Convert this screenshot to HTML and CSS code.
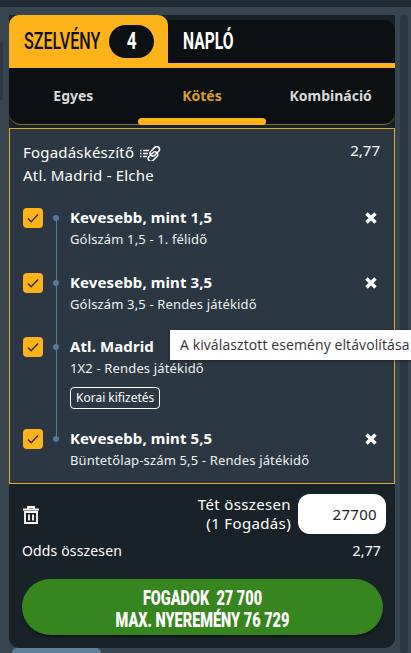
FILE: index.html
```html
<!DOCTYPE html>
<html lang="hu">
<head>
  <meta charset="UTF-8">
  <title>Szelvény</title>
  <link rel="stylesheet" href="styles.css">
</head>
<body>

  <div class="top-bar"></div>

  <div class="page">
    <div class="side-stub"></div>

    <div class="slip">
      <div class="tabs">
        <div class="tab active"><span class="tab-label">SZELVÉNY</span> <span class="count"><span class="count-num">4</span></span></div>
        <div class="tab"><span class="tab-label bold">NAPLÓ</span></div>
      </div>

      <div class="subtabs">
        <div class="subtab">Egyes</div>
        <div class="subtab current">Kötés</div>
        <div class="subtab">Kombináció</div>
      </div>

      <div class="builder">
        <div class="builder-head">
          <div>
            <div class="builder-title">Fogadáskészítő
              <svg class="link-icon" width="24" height="15" viewBox="0 0 24 15">
                <path d="M0 4.5h1.5M0 7.5h1.5M0 10.5h1.5M3 4.5h6M3 7.5h5M3 10.5h4" stroke="#fff" stroke-width="1.4" fill="none"/>
                <rect x="7.5" y="5" width="11" height="5.5" rx="2.75" transform="rotate(-45 13 7.75) translate(-2 2)" stroke="#fff" stroke-width="1.5" fill="none"/>
                <rect x="7.5" y="5" width="11" height="5.5" rx="2.75" transform="rotate(-45 13 7.75) translate(3 -.5)" stroke="#fff" stroke-width="1.5" fill="none"/>
              </svg>
            </div>
            <div class="builder-match">Atl. Madrid - Elche</div>
          </div>
          <div class="builder-odds">2,77</div>
        </div>

        <div class="legs">
          <div class="leg">
            <div class="check"><svg width="14" height="14" viewBox="0 0 14 14"><path d="M2 7.5l3.2 3.2L12 3.5" stroke="#3a2a05" stroke-width="1.4" fill="none"/></svg></div>
            <div class="dot"></div>
            <div class="leg-text">
              <div class="leg-title">Kevesebb, mint 1,5</div>
              <div class="leg-sub">Gólszám 1,5 - 1. félidő</div>
            </div>
            <svg class="remove" width="12" height="12" viewBox="0 0 12 12"><path d="M1.5 1.5l9 9M10.5 1.5l-9 9" stroke="#fff" stroke-width="3.4"/></svg>
          </div>

          <div class="leg">
            <div class="check"><svg width="14" height="14" viewBox="0 0 14 14"><path d="M2 7.5l3.2 3.2L12 3.5" stroke="#3a2a05" stroke-width="1.4" fill="none"/></svg></div>
            <div class="dot"></div>
            <div class="leg-text">
              <div class="leg-title">Kevesebb, mint 3,5</div>
              <div class="leg-sub">Gólszám 3,5 - Rendes játékidő</div>
            </div>
            <svg class="remove" width="12" height="12" viewBox="0 0 12 12"><path d="M1.5 1.5l9 9M10.5 1.5l-9 9" stroke="#fff" stroke-width="3.4"/></svg>
          </div>

          <div class="leg tall">
            <div class="check"><svg width="14" height="14" viewBox="0 0 14 14"><path d="M2 7.5l3.2 3.2L12 3.5" stroke="#3a2a05" stroke-width="1.4" fill="none"/></svg></div>
            <div class="dot"></div>
            <div class="leg-text">
              <div class="leg-title">Atl. Madrid</div>
              <div class="leg-sub">1X2 - Rendes játékidő</div>
              <div class="tag">Korai kifizetés</div>
            </div>
          </div>

          <div class="leg last">
            <div class="check"><svg width="14" height="14" viewBox="0 0 14 14"><path d="M2 7.5l3.2 3.2L12 3.5" stroke="#3a2a05" stroke-width="1.4" fill="none"/></svg></div>
            <div class="dot"></div>
            <div class="leg-text">
              <div class="leg-title">Kevesebb, mint 5,5</div>
              <div class="leg-sub">Büntetőlap-szám 5,5 - Rendes játékidő</div>
            </div>
            <svg class="remove" width="12" height="12" viewBox="0 0 12 12"><path d="M1.5 1.5l9 9M10.5 1.5l-9 9" stroke="#fff" stroke-width="3.4"/></svg>
          </div>
        </div>

        <div class="tooltip">A kiválasztott esemény eltávolítása</div>
      </div>

      <div class="summary">
        <div class="stake-row">
          <svg class="trash" width="18" height="20" viewBox="0 0 18 20">
            <path d="M1 4.5h16M6 4V2h6v2" stroke="#fff" stroke-width="1.8" fill="none"/>
            <path d="M3 7h12v11H3z" stroke="#fff" stroke-width="1.8" fill="none"/>
            <path d="M7 9.5v6M11 9.5v6" stroke="#fff" stroke-width="1.8"/>
          </svg>
          <div class="stake-label">Tét összesen<br>(1 Fogadás)</div>
          <div class="stake-input">27700</div>
        </div>
        <div class="odds-row">
          <span>Odds összesen</span>
          <span class="odds-value">2,77</span>
        </div>
        <button class="place-bet"><span class="bet-text">FOGADOK&nbsp; 27 700<br>MAX. NYEREMÉNY 76 729</span></button>
      </div>
    </div>

    <div class="scrollbar"></div>
  </div>

  <div class="next-card"></div>

</body>
</html>
```

FILE: styles.css
```css
html, body {
  height: 100%;
}

body {
  font-family: "Noto Sans", Arial, sans-serif;
  background: #36454f;
  margin: 0;
  padding: 0;
  color: #fff;
  overflow: hidden;
  position: relative;
}

.top-bar {
  height: 7px;
  background: #1f2a33;
}

.page {
  display: flex;
  padding: 8px 3px 0 0;
  align-items: flex-start;
}

.side-stub {
  width: 3px;
  height: 58px;
  margin: 27px 6px 0 0;
  background: #2b3843;
  border-radius: 0 4px 4px 0;
}

.scrollbar {
  width: 8px;
  height: 638px;
  margin-left: 5px;
  background: #2b3843;
  border-radius: 4px;
}

.slip {
  width: 386px;
  background: #1a2229;
  border-radius: 0 0 10px 10px;
  height: 633px;
}

.tabs {
  display: flex;
  align-items: flex-end;
  height: 53px;
}

.tab {
  flex: 1;
  height: 43px;
  background: #0c1013;
  border-bottom: 5px solid #ffb31a;
  border-radius: 0 10px 0 0;
  font-family: Roboto, "Liberation Sans", sans-serif;
  font-size: 23px;
  line-height: 43px;
  padding-left: 15px;
}

.tab-label {
  display: inline-block;
  width: 78px;
  white-space: nowrap;
  font-weight: 500;
  transform: scaleX(.7);
  transform-origin: left center;
}

.tab-label.bold {
  font-weight: bold;
  transform: scaleX(.68);
}

.tab.active {
  flex: 0 0 159px;
  box-sizing: border-box;
  height: 53px;
  padding: 0 0 0 15px;
  background: #ffb31a;
  border-bottom: 0;
  border-radius: 10px 10px 0 0;
  color: #0c1013;
  display: flex;
  align-items: center;
  gap: 7px;
}

.count {
  width: 45px;
  height: 33px;
  background: #0c1013;
  color: #fff;
  border-radius: 17px;
  text-align: center;
  line-height: 33px;
  font-weight: bold;
}

.count-num {
  display: inline-block;
  transform: scaleX(.75);
}

.subtabs {
  display: flex;
  height: 57px;
  background: #0c1013;
  border-radius: 0 0 12px 12px;
  border-bottom: 1px solid #8a6c24;
  box-sizing: border-box;
}

.subtab {
  flex: 1;
  text-align: center;
  line-height: 56px;
  font-size: 14px;
  font-weight: bold;
  color: #d8dadb;
}

.subtab.current {
  color: #d9a021;
}

.subtab.current::after {
  content: "";
  display: block;
  width: 128px;
  height: 7px;
  margin: -3px auto 0;
  background: #ffb31a;
  border-radius: 4px;
  position: relative;
  top: -3px;
}

.builder {
  box-sizing: border-box;
  height: 356px;
  margin-top: 3px;
  padding: 12px 13px 0;
  background: #2b3843;
  border: 1px solid #e3a82b;
  position: relative;
}

.builder-head {
  display: flex;
  justify-content: space-between;
  font-size: 15px;
  line-height: 23px;
  height: 67px;
}

.builder-title, .builder-match {
  letter-spacing: .2px;
}

.link-icon {
  vertical-align: -3px;
  margin-left: 2px;
}

.builder-odds {
  margin-top: -2px;
  padding-right: 1px;
}

.legs {
  position: relative;
}

.legs::before {
  content: "";
  position: absolute;
  left: 33px;
  top: 10px;
  height: 220px;
  width: 1px;
  background: #5a7a92;
}

.leg {
  display: flex;
  align-items: flex-start;
  height: 64.5px;
}

.leg.tall {
  height: 92px;
}

.leg.last {
  height: auto;
}

.check {
  flex: none;
  width: 20px;
  height: 20px;
  background: #ffb31a;
  border-radius: 4px;
  display: flex;
  align-items: center;
  justify-content: center;
}

.dot {
  flex: none;
  width: 6px;
  height: 6px;
  margin: 7px 11px 0 10px;
  background: #557a96;
  border-radius: 50%;
  position: relative;
}

.leg-text {
  flex: 1;
}

.leg-title {
  font-size: 15px;
  font-weight: bold;
  line-height: 20px;
  letter-spacing: .1px;
  margin: -1px 0 1px;
}

.leg-sub {
  font-size: 13px;
  line-height: 22px;
  letter-spacing: .15px;
  color: #eef0f1;
}

.tag {
  display: inline-block;
  margin-top: 8px;
  padding: 0 5px;
  border: 1px solid #fff;
  border-radius: 4px;
  font-size: 12px;
  line-height: 20px;
}

.remove {
  flex: none;
  margin: 4px 4px 0 0;
}

.tooltip {
  position: absolute;
  left: 160px;
  top: 201px;
  width: 250px;
  height: 30px;
  box-sizing: border-box;
  background: #fff;
  color: #333;
  font-family: "Open Sans", sans-serif;
  font-size: 14px;
  letter-spacing: .1px;
  line-height: 29px;
  padding-left: 10px;
  white-space: nowrap;
  box-shadow: 0 1px 3px rgba(0,0,0,0.4);
}

.summary {
  padding: 10px 9px 0 13px;
}

.stake-row {
  display: flex;
  align-items: center;
}

.trash {
  margin-top: 1px;
}

.stake-label {
  flex: 1;
  text-align: right;
  font-size: 15px;
  letter-spacing: .35px;
  line-height: 19px;
  margin-right: 7px;
}

.stake-input {
  width: 88px;
  height: 40px;
  box-sizing: border-box;
  background: #fff;
  color: #222;
  border-radius: 12px;
  font-size: 15px;
  letter-spacing: .3px;
  line-height: 40px;
  text-align: right;
  padding-right: 9px;
}

.odds-row {
  display: flex;
  justify-content: space-between;
  font-size: 14px;
  letter-spacing: .15px;
  line-height: 20px;
  margin-top: 7px;
}

.odds-value {
  margin-right: 5px;
}

.place-bet {
  display: block;
  width: 361px;
  height: 56px;
  margin-top: 18px;
  padding: 4px 0 0;
  background: #37851f;
  color: #fff;
  border: none;
  border-radius: 28px;
  box-shadow: 0 2px 2px rgba(0,0,0,0.4);
  font-family: Roboto, "Liberation Sans", sans-serif;
  font-weight: 900;
  font-size: 21px;
  line-height: 22px;
  cursor: pointer;
}

.bet-text {
  display: block;
  white-space: nowrap;
  transform: scaleX(.69);
}

.next-card {
  position: absolute;
  left: 12px;
  bottom: 0;
  width: 89px;
  height: 5px;
  background: #5d7f99;
  border-radius: 6px 6px 0 0;
}
```
